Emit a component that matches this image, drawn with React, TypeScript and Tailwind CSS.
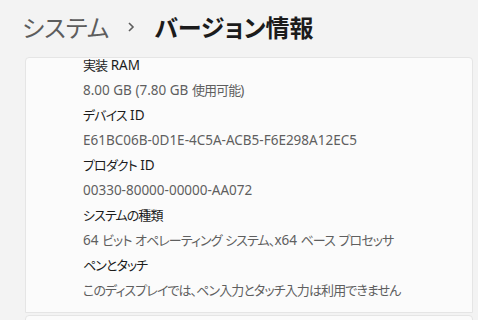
import React from 'react';

const rows = [
  { label: '実装 RAM', value: '8.00 GB (7.80 GB 使用可能)' },
  { label: 'デバイス ID', value: 'E61BC06B-0D1E-4C5A-ACB5-F6E298A12EC5' },
  { label: 'プロダクト ID', value: '00330-80000-00000-AA072' },
  { label: 'システムの種類', value: '64 ビット オペレーティング システム、x64 ベース プロセッサ' },
  { label: 'ペンとタッチ', value: 'このディスプレイでは、ペン入力とタッチ入力は利用できません' },
];

// japanese runs get a tighter, slightly smaller setting (closer to Yu Gothic UI widths)
const Mixed = ({ text }: { text: string }) => {
  const parts = text.split(/([\u3000-\u30ff\u4e00-\u9fff\uff00-\uffef]+)/);
  return (
    <>
      {parts.map((p, i) =>
        i % 2 === 1 ? (
          <span key={i} className="text-[13px] tracking-[-0.9px]">
            {p}
          </span>
        ) : (
          <span key={i}>{p}</span>
        )
      )}
    </>
  );
};

export default function App() {
  return (
    <div className="w-[478px] h-[320px] overflow-hidden bg-[#f3f3f3] [font-family:'Noto_Sans','Noto_Sans_CJK_JP',sans-serif] [font-feature-settings:'palt']">
      {/* breadcrumb header */}
      <div className="h-[53px] flex items-center pl-[22px] [font-family:'Noto_Sans_CJK_JP',sans-serif]">
        <span className="text-[24px] leading-none text-[#5d5d5d]">システム</span>
        <svg className="ml-[18px] mr-[19px]" width="8" height="12" viewBox="0 0 8 12">
          <path d="M2 2 L6 6 L2 10" fill="none" stroke="#5d5d5d" strokeWidth="1.6" />
        </svg>
        <span className="text-[24px] leading-none font-semibold text-[#1b1b1b]">バージョン情報</span>
      </div>

      {/* spec card */}
      <div className="mt-[4px] ml-[25px] w-[448px] bg-[#fbfbfb] border border-[#e5e5e5] rounded-t-[4px] pl-[57px] pb-[15px] flex flex-col gap-[11px] text-[13.5px] leading-[14px]">
        {rows.map((r) => (
          <React.Fragment key={r.label}>
            <div className="text-[#1b1b1b] whitespace-nowrap">
              <Mixed text={r.label} />
            </div>
            <div className="text-[#5f5f5f] whitespace-nowrap">
              <Mixed text={r.value} />
            </div>
          </React.Fragment>
        ))}
      </div>

      {/* next card peeking in */}
      <div className="mt-[2px] ml-[25px] w-[448px] h-[20px] bg-[#fbfbfb] border border-[#e5e5e5] rounded-t-[4px]" />
    </div>
  );
}
